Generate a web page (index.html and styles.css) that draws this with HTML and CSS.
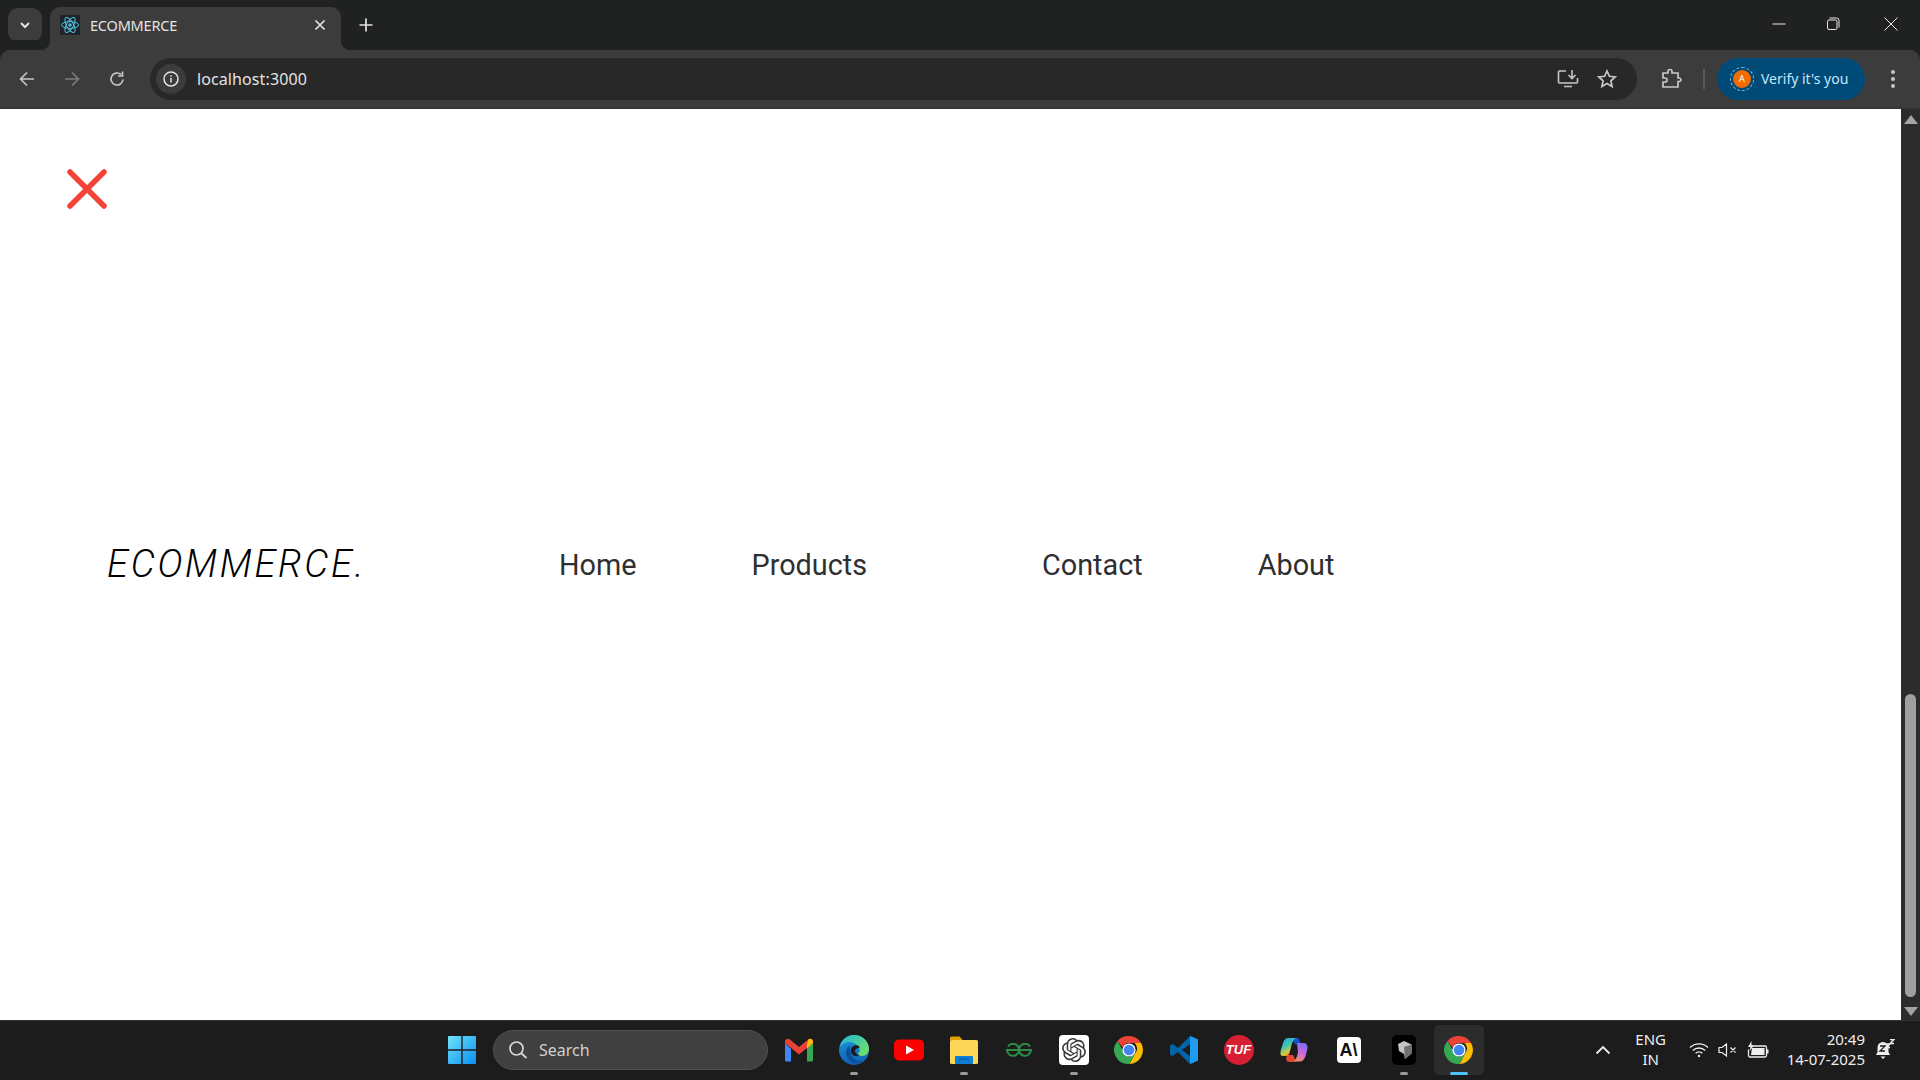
FILE: index.html
```html
<!DOCTYPE html>
<html lang="en">
<head>
    <meta charset="UTF-8">
    <meta name="viewport" content="width=device-width, initial-scale=1.0">
    <title>ECOMMERCE</title>
    <link rel="stylesheet" href="styles.css">
</head>
<body>
    <div class="tabstrip">
        <div class="tab-search">
            <svg width="14" height="14" viewBox="0 0 14 14"><path d="M3 5l4 4 4-4" fill="none" stroke="#e3e3e3" stroke-width="2"/></svg>
        </div>
        <div class="tab">
            <span class="favicon">
                <svg width="20" height="20" viewBox="0 0 20 20" fill="none" stroke="#4fc3dc" stroke-width="1">
                    <ellipse cx="10" cy="10" rx="8.5" ry="3.4"/>
                    <ellipse cx="10" cy="10" rx="8.5" ry="3.4" transform="rotate(60 10 10)"/>
                    <ellipse cx="10" cy="10" rx="8.5" ry="3.4" transform="rotate(120 10 10)"/>
                    <circle cx="10" cy="10" r="1.7" fill="#4fc3dc" stroke="none"/>
                </svg>
            </span>
            <span class="tab-title">ECOMMERCE</span>
            <svg class="tab-close" width="12" height="12" viewBox="0 0 12 12"><path d="M1.5 1.5l9 9M10.5 1.5l-9 9" stroke="#e3e3e3" stroke-width="1.7"/></svg>
        </div>
        <svg class="new-tab" width="14" height="14" viewBox="0 0 14 14"><path d="M7 .5v13M.5 7h13" stroke="#e3e3e3" stroke-width="1.7"/></svg>
        <div class="window-controls">
            <svg class="minimize" width="14" height="14" viewBox="0 0 14 14"><path d="M.5 7h13" stroke="#e8e8e8" stroke-width="1"/></svg>
            <svg width="14" height="14" viewBox="0 0 14 14" fill="none" stroke="#e8e8e8"><rect x="1.5" y="3" width="9.5" height="9.5" rx="1.5"/><path d="M3.5 1h7a2.5 2.5 0 0 1 2.5 2.5v7"/></svg>
            <svg width="14" height="14" viewBox="0 0 14 14"><path d="M.5.5l13 13M13.5.5l-13 13" stroke="#e8e8e8" stroke-width="1"/></svg>
        </div>
    </div>

    <div class="toolbar">
        <svg class="nav-icon" width="18" height="18" viewBox="0 0 18 18" fill="none" stroke="#c7c7c7" stroke-width="1.7"><path d="M16 9H2.500M9 2.500L2.500 9 9 15.500"/></svg>
        <svg class="nav-icon" width="18" height="18" viewBox="0 0 18 18" fill="none" stroke="#7c7c7c" stroke-width="1.7"><path d="M2 9h13.500M9 2.500L15.500 9 9 15.500"/></svg>
        <svg class="nav-icon" width="18" height="18" viewBox="0 0 18 18" fill="none" stroke="#c7c7c7" stroke-width="1.7"><path d="M15 9.500A6 6 0 1 1 13 4.500"/><path d="M14.500 1.500v4.500H10"/></svg>
        <div class="omnibox">
            <span class="site-info">
                <svg width="16" height="16" viewBox="0 0 16 16" fill="none" stroke="#e3e3e3" stroke-width="1.5"><circle cx="8" cy="8" r="7"/><path d="M8 7v4.500M8 4.200v1.500"/></svg>
            </span>
            <span class="url">localhost:3000</span>
            <svg class="install-icon" width="22" height="20" viewBox="0 0 22 20" fill="none" stroke="#c7c7c7" stroke-width="1.6"><path d="M9 2H2.500a1 1 0 0 0-1 1v10a1 1 0 0 0 1 1h17a1 1 0 0 0 1-1V9"/><path d="M15 1v8M11.500 6l3.500 3.500L18.500 6M7 17.500h8"/></svg>
            <svg class="star-icon" width="20" height="20" viewBox="0 0 20 20" fill="none" stroke="#c7c7c7" stroke-width="1.7"><path d="M10 2l2.400 5.300 5.800.6-4.300 3.900 1.200 5.700L10 14.600l-5.100 2.900 1.200-5.700L1.800 7.900l5.800-.6z"/></svg>
        </div>
        <svg class="puzzle" width="22" height="22" viewBox="0 0 22 22" fill="none" stroke="#c7c7c7" stroke-width="1.7"><path d="M8 5V3.500a2 2 0 0 1 4 0V5h6v5h1.500a1.800 1.800 0 0 1 0 3.500H18V19H3v-5h2a2 2 0 0 0 0-4H3V5z"/></svg>
        <span class="divider"></span>
        <div class="verify-pill">
            <span class="avatar-ring"><span class="avatar">A</span></span>
            <span class="verify-text">Verify it's you</span>
        </div>
        <span class="menu-dots"><i></i><i></i><i></i></span>
    </div>

    <div class="viewport">
        <main class="page">
            <svg class="close-menu" width="42" height="42" viewBox="0 0 42 42"><path d="M4 4l34 34M38 4L4 38" stroke="#f44336" stroke-width="5.5" stroke-linecap="round"/></svg>
            <nav class="navbar">
                <span class="logo">ECOMMERCE.</span>
                <div class="nav-links">
                    <a class="nav-link">Home</a>
                    <a class="nav-link">Products</a>
                    <a class="nav-link contact-link">Contact</a>
                    <a class="nav-link">About</a>
                </div>
            </nav>
        </main>
        <div class="scrollbar">
            <span class="arrow-up"></span>
            <div class="scroll-track"><span class="scroll-thumb"></span></div>
            <span class="arrow-down"></span>
        </div>
    </div>

    <footer class="taskbar">
        <div class="taskbar-center">
            <svg class="start-icon" width="30" height="30" viewBox="0 0 30 30">
                <defs><linearGradient id="win" x1="0" y1="0" x2="1" y2="1"><stop offset="0" stop-color="#6fe3fb"/><stop offset="1" stop-color="#0a8fee"/></linearGradient></defs>
                <path fill="url(#win)" d="M1 2a1 1 0 0 1 1-1h12.300v13.300H1zM15.700 1H28a1 1 0 0 1 1 1v12.300H15.700zM1 15.700h13.300V29H2a1 1 0 0 1-1-1zM15.700 15.700H29V28a1 1 0 0 1-1 1H15.700z"/>
            </svg>
            <div class="search-box">
                <svg width="20" height="20" viewBox="0 0 20 20" fill="none" stroke="#d8d8d8" stroke-width="1.7"><circle cx="8.500" cy="8.500" r="6.500"/><path d="M13 13l5.500 5"/></svg>
                <span>Search</span>
            </div>
            <div class="app-icons">
                <span class="app">
                    <svg width="30" height="24" viewBox="0 0 30 24">
                        <path fill="#4285f4" d="M1 5v17a1.500 1.500 0 0 0 1.500 1.500H7V11z"/>
                        <path fill="#34a853" d="M23 11v12.500h4.500A1.500 1.500 0 0 0 29 22V5z"/>
                        <path fill="#ea4335" d="M1 3.500C1 .8 4 0 5.500 1.200L15 9l9.500-7.800C26 0 29 .8 29 3.500V5l-14 11.500L1 5z"/>
                        <path fill="#fbbc04" d="M23 6.200l1.500-5C26 0 29 .8 29 3.500V5l-6 6z"/>
                    </svg>
                </span>
                <span class="app running">
                    <svg width="30" height="30" viewBox="0 0 30 30">
                        <defs>
                            <linearGradient id="edge-a" x1="0" y1="0" x2="0" y2="1"><stop offset="0" stop-color="#1f9ae0"/><stop offset="1" stop-color="#0d5fb0"/></linearGradient>
                            <linearGradient id="edge-b" x1="0" y1="0" x2="1" y2=".7"><stop offset="0" stop-color="#1fb4dc"/><stop offset="1" stop-color="#6fe06a"/></linearGradient>
                        </defs>
                        <circle cx="15" cy="15" r="15" fill="url(#edge-a)"/>
                        <path fill="url(#edge-b)" d="M15 0C23 0 30 6 30 14c0 4-3 7-7 7-2 0-4-1-4-3 2-1 2-3 1-5-2-4-6-6-10-6C6 7 3 9 1 12 2 5 8 0 15 0z"/>
                        <path fill="#0b4f97" d="M11 10c-4 3-5 8-3 12 2 4 7 7 12 6 2-.5 3-1 4-2-4 1-8 0-10-3-3-4-4-9-3-13z"/>
                        <path fill="#1c1c1c" d="M20 11c-3-1.500-7-.5-8 3-1 3 1 6 4 7 2 .5 3.500 0 3.500-1-2-1-3.500-2.500-3.500-4 0-2 2-3 4-3 .5-1 .5-1.500 0-2z"/>
                    </svg>
                </span>
                <span class="app">
                    <svg width="30" height="22" viewBox="0 0 30 22"><rect width="30" height="21" y=".5" rx="5" fill="#f00"/><path d="M12 6.500v9l8-4.500z" fill="#fff"/></svg>
                </span>
                <span class="app running">
                    <svg width="30" height="28" viewBox="0 0 30 28">
                        <path fill="#e0a100" d="M1 2a1.500 1.500 0 0 1 1.500-1.500h8L14 4.500H1z"/>
                        <rect x="1" y="4" width="28" height="24" rx="1.500" fill="#fcd659"/>
                        <rect x="6" y="20" width="18" height="8" rx="1" fill="#0f7fd6"/>
                        <path d="M10 23h10" stroke="#0a5ea3" stroke-width="1.5"/>
                    </svg>
                </span>
                <span class="app">
                    <svg width="28" height="14" viewBox="0 0 28 14" fill="none" stroke="#2f8d46" stroke-width="2"><path d="M3 3.500A6 6 0 1 1 2 7h11M25 3.500A6 6 0 1 0 26 7H15"/></svg>
                </span>
                <span class="app running">
                    <span class="gpt-badge">
                        <svg width="24" height="24" viewBox="0 0 24 24"><path fill="#3a3a3a" d="M22.2819 9.8211a5.9847 5.9847 0 0 0-.5157-4.9108 6.0462 6.0462 0 0 0-6.5098-2.9A6.0651 6.0651 0 0 0 4.9807 4.1818a5.9847 5.9847 0 0 0-3.9977 2.9 6.0462 6.0462 0 0 0 .7427 7.0966 5.98 5.98 0 0 0 .511 4.9107 6.051 6.051 0 0 0 6.5146 2.9001A5.9847 5.9847 0 0 0 13.2599 24a6.0557 6.0557 0 0 0 5.7718-4.2058 5.9894 5.9894 0 0 0 3.9977-2.9001 6.0557 6.0557 0 0 0-.7475-7.0729zm-9.022 12.6081a4.4755 4.4755 0 0 1-2.8764-1.0408l.1419-.0804 4.7783-2.7582a.7948.7948 0 0 0 .3927-.6813v-6.7369l2.02 1.1686a.071.071 0 0 1 .038.052v5.5826a4.504 4.504 0 0 1-4.4945 4.4944zm-9.6607-4.1254a4.4708 4.4708 0 0 1-.5346-3.0137l.142.0852 4.783 2.7582a.7712.7712 0 0 0 .7806 0l5.8428-3.3685v2.3324a.0804.0804 0 0 1-.0332.0615L9.74 19.9502a4.4992 4.4992 0 0 1-6.1408-1.6464zM2.3408 7.8956a4.485 4.485 0 0 1 2.3655-1.9728V11.6a.7664.7664 0 0 0 .3879.6765l5.8144 3.3543-2.0201 1.1685a.0757.0757 0 0 1-.071 0l-4.8303-2.7865A4.504 4.504 0 0 1 2.3408 7.872zm16.5963 3.8558L13.1038 8.364 15.1192 7.2a.0757.0757 0 0 1 .071 0l4.8303 2.7913a4.4944 4.4944 0 0 1-.6765 8.1042v-5.6772a.79.79 0 0 0-.407-.667zm2.0107-3.0231l-.142-.0852-4.7735-2.7818a.7759.7759 0 0 0-.7854 0L9.409 9.2297V6.8974a.0662.0662 0 0 1 .0284-.0615l4.8303-2.7866a4.4992 4.4992 0 0 1 6.6802 4.66zM8.3065 12.863l-2.02-1.1638a.0804.0804 0 0 1-.038-.0567V6.0742a4.4992 4.4992 0 0 1 7.3757-3.4537l-.142.0805L8.704 5.459a.7948.7948 0 0 0-.3927.6813zm1.0976-2.3654l2.602-1.4998 2.6069 1.4998v2.9994l-2.5974 1.4997-2.6067-1.4997Z"/></svg>
                    </span>
                </span>
                <span class="app">
                    <svg width="30" height="30" viewBox="0 0 30 30">
                        <path fill="#ea4335" d="M15 1a14 14 0 0 1 12.100 7H15a7 7 0 0 0-6.500 4.500L3.500 6A14 14 0 0 1 15 1z"/>
                        <path fill="#fbbc04" d="M27.100 8A14 14 0 0 1 15.500 29l5.500-10.500a7 7 0 0 0-.5-10.500z"/>
                        <path fill="#34a853" d="M15.500 29A14 14 0 0 1 3.500 6l6 10.500a7 7 0 0 0 6.500 5.500l5-3.500z"/>
                        <circle cx="15" cy="15" r="6.600" fill="#fff"/><circle cx="15" cy="15" r="5.300" fill="#4285f4"/>
                    </svg>
                </span>
                <span class="app">
                    <svg width="30" height="30" viewBox="0 0 30 30">
                        <path fill="#0065a9" d="M21 1L9 13 3.500 9 1 10.500v9L3.500 21 9 17l12 12 8-3.500v-21zM21 9v12l-8-6z"/>
                        <path fill="#1f9cf0" d="M21 1l8 3.500v21L21 29z"/>
                    </svg>
                </span>
                <span class="app">
                    <span class="tuf-badge">TUF</span>
                </span>
                <span class="app">
                    <svg width="28" height="25" viewBox="0 0 28 25">
                        <defs>
                            <linearGradient id="cop-a" x1="0" y1="0" x2=".5" y2="1"><stop offset="0" stop-color="#2a9ff0"/><stop offset=".5" stop-color="#3fc7b0"/><stop offset=".8" stop-color="#d9c93a"/><stop offset="1" stop-color="#f0832e"/></linearGradient>
                            <linearGradient id="cop-b" x1=".7" y1="0" x2=".3" y2="1"><stop offset="0" stop-color="#7b6cf0"/><stop offset=".55" stop-color="#d06bd6"/><stop offset="1" stop-color="#f5906a"/></linearGradient>
                        </defs>
                        <path fill="#1b4fd0" d="M11 1h6c1 0 2 .5 2.500 2L21 8l-6-1z"/>
                        <path fill="#e0472e" d="M7 18l6 0 3 6c-1 .5-2 1-3 1H9c-2 0-2.500-1-3-3z"/>
                        <path fill="url(#cop-b)" d="M17 6h7c2 0 3.500 2 3.500 4.500 0 1.500-.5 3.500-1 5-1 3.500-2 9-6.500 9h-7c3-1 4-5 5-9z"/>
                        <path fill="url(#cop-a)" d="M8 1h8c-2 1-3.500 3-4.500 7-.8 3.500-1.500 6-2 8-.5 2-2 3-3.500 3H3c-2 0-3-1.500-2.500-4 .5-2.500 1-4.500 2-7C3.500 4 5 1 8 1z"/>
                    </svg>
                </span>
                <span class="app">
                    <span class="mono-badge">A\</span>
                </span>
                <span class="app running">
                    <svg width="24" height="30" viewBox="0 0 24 30">
                        <rect width="24" height="30" rx="5" fill="#000"/>
                        <path fill="#c4c4c4" d="M12 6l7.500 3.500v9L13 24l-1-5-5-3-1-7z"/>
                        <path fill="#707070" d="M12 12l7.500-2.500v9L13 24z"/>
                    </svg>
                </span>
                <span class="app active">
                    <svg width="30" height="30" viewBox="0 0 30 30">
                        <path fill="#ea4335" d="M15 1a14 14 0 0 1 12.100 7H15a7 7 0 0 0-6.500 4.500L3.500 6A14 14 0 0 1 15 1z"/>
                        <path fill="#fbbc04" d="M27.100 8A14 14 0 0 1 15.500 29l5.500-10.500a7 7 0 0 0-.5-10.500z"/>
                        <path fill="#34a853" d="M15.500 29A14 14 0 0 1 3.500 6l6 10.500a7 7 0 0 0 6.500 5.500l5-3.500z"/>
                        <circle cx="15" cy="15" r="6.600" fill="#fff"/><circle cx="15" cy="15" r="5.300" fill="#4285f4"/>
                    </svg>
                </span>
            </div>
        </div>
        <div class="tray">
            <svg class="tray-chevron" width="16" height="10" viewBox="0 0 16 10"><path d="M1.500 8.500L8 2l6.500 6.500" fill="none" stroke="#eee" stroke-width="1.8"/></svg>
            <div class="lang"><span>ENG</span><span>IN</span></div>
            <div class="tray-icons">
                <svg width="20" height="16" viewBox="0 0 20 16" fill="none" stroke="#eee" stroke-width="1.3"><path d="M1 5.500a13 13 0 0 1 18 0M3.800 8.500a9 9 0 0 1 12.400 0M6.600 11.300a5 5 0 0 1 6.800 0"/><circle cx="10" cy="14" r="1.200" fill="#eee" stroke="none"/></svg>
                <svg width="20" height="16" viewBox="0 0 20 16" fill="none" stroke="#eee" stroke-width="1.2"><path d="M1 5.500v5h3l4.500 3.500v-12L4 5.500zM12.500 5.500l5 5M17.500 5.500l-5 5"/></svg>
                <svg width="22" height="18" viewBox="0 0 22 18"><path d="M4 5h14a1.500 1.500 0 0 1 1.500 1.500v8A1.500 1.500 0 0 1 18 16H3a1.500 1.500 0 0 1-1.500-1.500v-6" fill="none" stroke="#eee" stroke-width="1.3"/><path d="M5 7h12.500v7H4zM20 8.500h1.500v4H20zM4.500 0L1 6h2.500L2.500 10 7 4.500H4.500z" fill="#eee"/></svg>
            </div>
            <div class="clock"><span>20:49</span><span>14-07-2025</span></div>
            <svg class="bell" width="20" height="22" viewBox="0 0 20 22"><path d="M8 3a5.500 5.500 0 0 0-5.500 5.500V13L1 16h14l-1.500-3V8.500A5.500 5.500 0 0 0 8 3zM5.500 17.500h5L8 20z" fill="#eee"/><path d="M5 7h5l-5 5h5" fill="none" stroke="#1c1c1c" stroke-width="1.3"/><path d="M12 5h3l-3 3.500h3M15 .5h4l-4 4h4" fill="none" stroke="#eee" stroke-width="1.3"/></svg>
        </div>
    </footer>
</body>
</html>
```

FILE: styles.css
```css
* {
    box-sizing: border-box;
}

html, body {
    height: 100%;
}

body {
    margin: 0;
    display: flex;
    flex-direction: column;
    height: 100vh;
    overflow: hidden;
    background-color: #fff;
    font-family: "Noto Sans", "Open Sans", sans-serif;
}

/* browser chrome */
.tabstrip {
    height: 50px;
    flex-shrink: 0;
    display: flex;
    align-items: flex-start;
    padding: 8px 0 0 8px;
    background-color: #202221;
}

.tab-search {
    width: 34px;
    height: 34px;
    border-radius: 10px;
    background-color: #3c3c3c;
    display: flex;
    align-items: center;
    justify-content: center;
}

.tab {
    position: relative;
    width: 291px;
    height: 43px;
    margin: -1px 0 0 8px;
    padding: 0 15px 7px 10px;
    border-radius: 10px 10px 0 0;
    background-color: #3c3c3c;
    display: flex;
    align-items: center;
}

.tab::before,
.tab::after {
    content: "";
    position: absolute;
    bottom: 0;
    width: 10px;
    height: 10px;
}

.tab::before {
    left: -10px;
    background: radial-gradient(circle at 0 0, #202221 10px, #3c3c3c 10.5px);
}

.tab::after {
    right: -10px;
    background: radial-gradient(circle at 100% 0, #202221 10px, #3c3c3c 10.5px);
}

.favicon {
    width: 20px;
    height: 20px;
    background-color: #20232a;
    display: flex;
}

.tab-title {
    flex: 1;
    margin-left: 10px;
    font-size: 14.5px;
    color: #e3e3e3;
    letter-spacing: -0.2px;
}

.new-tab {
    margin: 10px 0 0 18px;
}

.window-controls {
    margin-left: auto;
    display: flex;
    gap: 44px;
    padding: 9px 22px 0 0;
}

.minimize {
    margin-right: -4px;
}

.toolbar {
    height: 59px;
    flex-shrink: 0;
    display: flex;
    align-items: center;
    padding: 0 18px 1px 18px;
    background-color: #3c3c3c;
    border-radius: 10px 10px 0 0;
    border-bottom: 1px solid #333;
    box-shadow: 0 -10px 0 #202221;
}

.nav-icon {
    margin-right: 27px;
}

.nav-icon:nth-child(3) {
    margin-right: 24px;
}

.omnibox {
    width: 1487px;
    height: 42px;
    border-radius: 21px;
    background-color: #282828;
    display: flex;
    align-items: center;
    padding: 0 20px 0 6px;
}

.site-info {
    width: 30px;
    height: 30px;
    border-radius: 50%;
    background-color: #3c3c3c;
    display: flex;
    align-items: center;
    justify-content: center;
}

.url {
    flex: 1;
    margin-left: 11px;
    font-size: 16px;
    letter-spacing: 0.1px;
    color: #e3e3e3;
}

.star-icon {
    margin-left: 18px;
}

.puzzle {
    margin-left: 23px;
}

.divider {
    width: 2px;
    height: 20px;
    margin-left: 21px;
    background-color: #5a5a5a;
}

.verify-pill {
    width: 148px;
    height: 42px;
    margin-left: 12px;
    border-radius: 21px;
    background-color: #004a77;
    display: flex;
    align-items: center;
    padding-left: 13px;
    color: #c2e7ff;
}

.avatar-ring {
    width: 24px;
    height: 24px;
    border-radius: 50%;
    border: 1px dashed #8fb4cc;
    display: flex;
    align-items: center;
    justify-content: center;
}

.avatar {
    width: 18px;
    height: 18px;
    border-radius: 50%;
    background-color: #ef6c00;
    color: #fff;
    font-size: 9px;
    line-height: 18px;
    text-align: center;
}

.verify-text {
    margin-left: 7px;
    font-size: 14px;
}

.menu-dots {
    margin-left: 26px;
    display: flex;
    flex-direction: column;
    gap: 3px;
}

.menu-dots i {
    width: 4px;
    height: 4px;
    border-radius: 50%;
    background-color: #c7c7c7;
}

/* page */
.viewport {
    flex: 1;
    display: flex;
    min-height: 0;
}

.page {
    flex: 1;
    background-color: #fff;
    padding: 59px 0 0 66px;
}

.close-menu {
    display: block;
}

.navbar {
    display: flex;
    align-items: center;
    margin-top: 332px;
    padding-left: 41px;
}

.logo {
    width: 452px;
    margin-bottom: 2px;
    font-family: "Roboto", sans-serif;
    font-style: italic;
    font-weight: 300;
    font-size: 38px;
    letter-spacing: 2.75px;
    color: #000;
}

.nav-links {
    display: flex;
    gap: 115px;
}

.nav-link {
    font-family: "Roboto", sans-serif;
    font-size: 28.8px;
    color: #2f2f2f;
}

.contact-link {
    margin-left: 60px;
}

.scrollbar {
    width: 19px;
    display: flex;
    flex-direction: column;
    align-items: center;
    background-color: #2c2c2c;
}

.scroll-track {
    flex: 1;
    width: 100%;
    display: flex;
    flex-direction: column;
    justify-content: flex-end;
    align-items: center;
}

.scroll-thumb {
    width: 11px;
    height: 303px;
    border-radius: 6px;
    background-color: #9f9f9f;
}

.arrow-up,
.arrow-down {
    width: 0;
    height: 0;
    border-left: 7px solid transparent;
    border-right: 7px solid transparent;
}

.arrow-up {
    margin-top: 6px;
    border-bottom: 9px solid #a3a3a3;
}

.arrow-down {
    margin: 10px 0 4px;
    border-top: 9px solid #a3a3a3;
}

/* windows taskbar */
.taskbar {
    height: 60px;
    flex-shrink: 0;
    display: flex;
    align-items: center;
    padding-bottom: 2px;
    background-color: #1c1c1c;
    border-top: 1px solid #333;
    color: #eee;
}

.taskbar-center {
    display: flex;
    align-items: center;
    margin-left: 447px;
}

.search-box {
    width: 275px;
    height: 40px;
    margin-left: 16px;
    border-radius: 20px;
    background-color: #404040;
    border: 1px solid #505050;
    display: flex;
    align-items: center;
    gap: 11px;
    padding-left: 14px;
    font-size: 16px;
    color: #d0d0d0;
}

.app-icons {
    display: flex;
    margin-left: 3px;
}

.app {
    position: relative;
    width: 55px;
    height: 50px;
    display: flex;
    align-items: center;
    justify-content: center;
}

.running::after,
.active::after {
    content: "";
    position: absolute;
    bottom: 0;
    left: 50%;
    width: 8px;
    height: 3px;
    margin-left: -4px;
    border-radius: 2px;
    background-color: #9a9a9a;
}

.active {
    width: 50px;
    margin-left: 3px;
    border-radius: 5px;
    background-color: #2c2c2c;
}

.active::after {
    width: 18px;
    margin-left: -9px;
    background-color: #4cc2ff;
}

.gpt-badge {
    width: 30px;
    height: 30px;
    border-radius: 4px;
    background-color: #fff;
    display: flex;
    align-items: center;
    justify-content: center;
}

.tuf-badge {
    width: 30px;
    height: 30px;
    border-radius: 50%;
    background-color: #d71f34;
    color: #fff;
    font-family: "Liberation Sans", sans-serif;
    font-size: 13px;
    font-weight: 700;
    font-style: italic;
    line-height: 30px;
    text-align: center;
}

.mono-badge {
    width: 24px;
    height: 26px;
    border-radius: 4px;
    background-color: #fff;
    color: #111;
    font-family: "Liberation Sans", sans-serif;
    font-size: 18px;
    font-weight: 700;
    line-height: 26px;
    text-align: center;
}

.tray {
    margin-left: auto;
    display: flex;
    align-items: center;
    padding-right: 25px;
    font-size: 15px;
}

.tray-chevron {
    margin-right: 24px;
}

.lang {
    display: flex;
    flex-direction: column;
    align-items: center;
    line-height: 20px;
    width: 32px;
    margin-bottom: 2px;
}

.tray-icons {
    display: flex;
    align-items: center;
    gap: 9px;
    margin-left: 22px;
}

.clock {
    display: flex;
    flex-direction: column;
    align-items: flex-end;
    margin: 0 0 2px 18px;
    line-height: 20px;
}

.bell {
    margin-left: 10px;
}
```
